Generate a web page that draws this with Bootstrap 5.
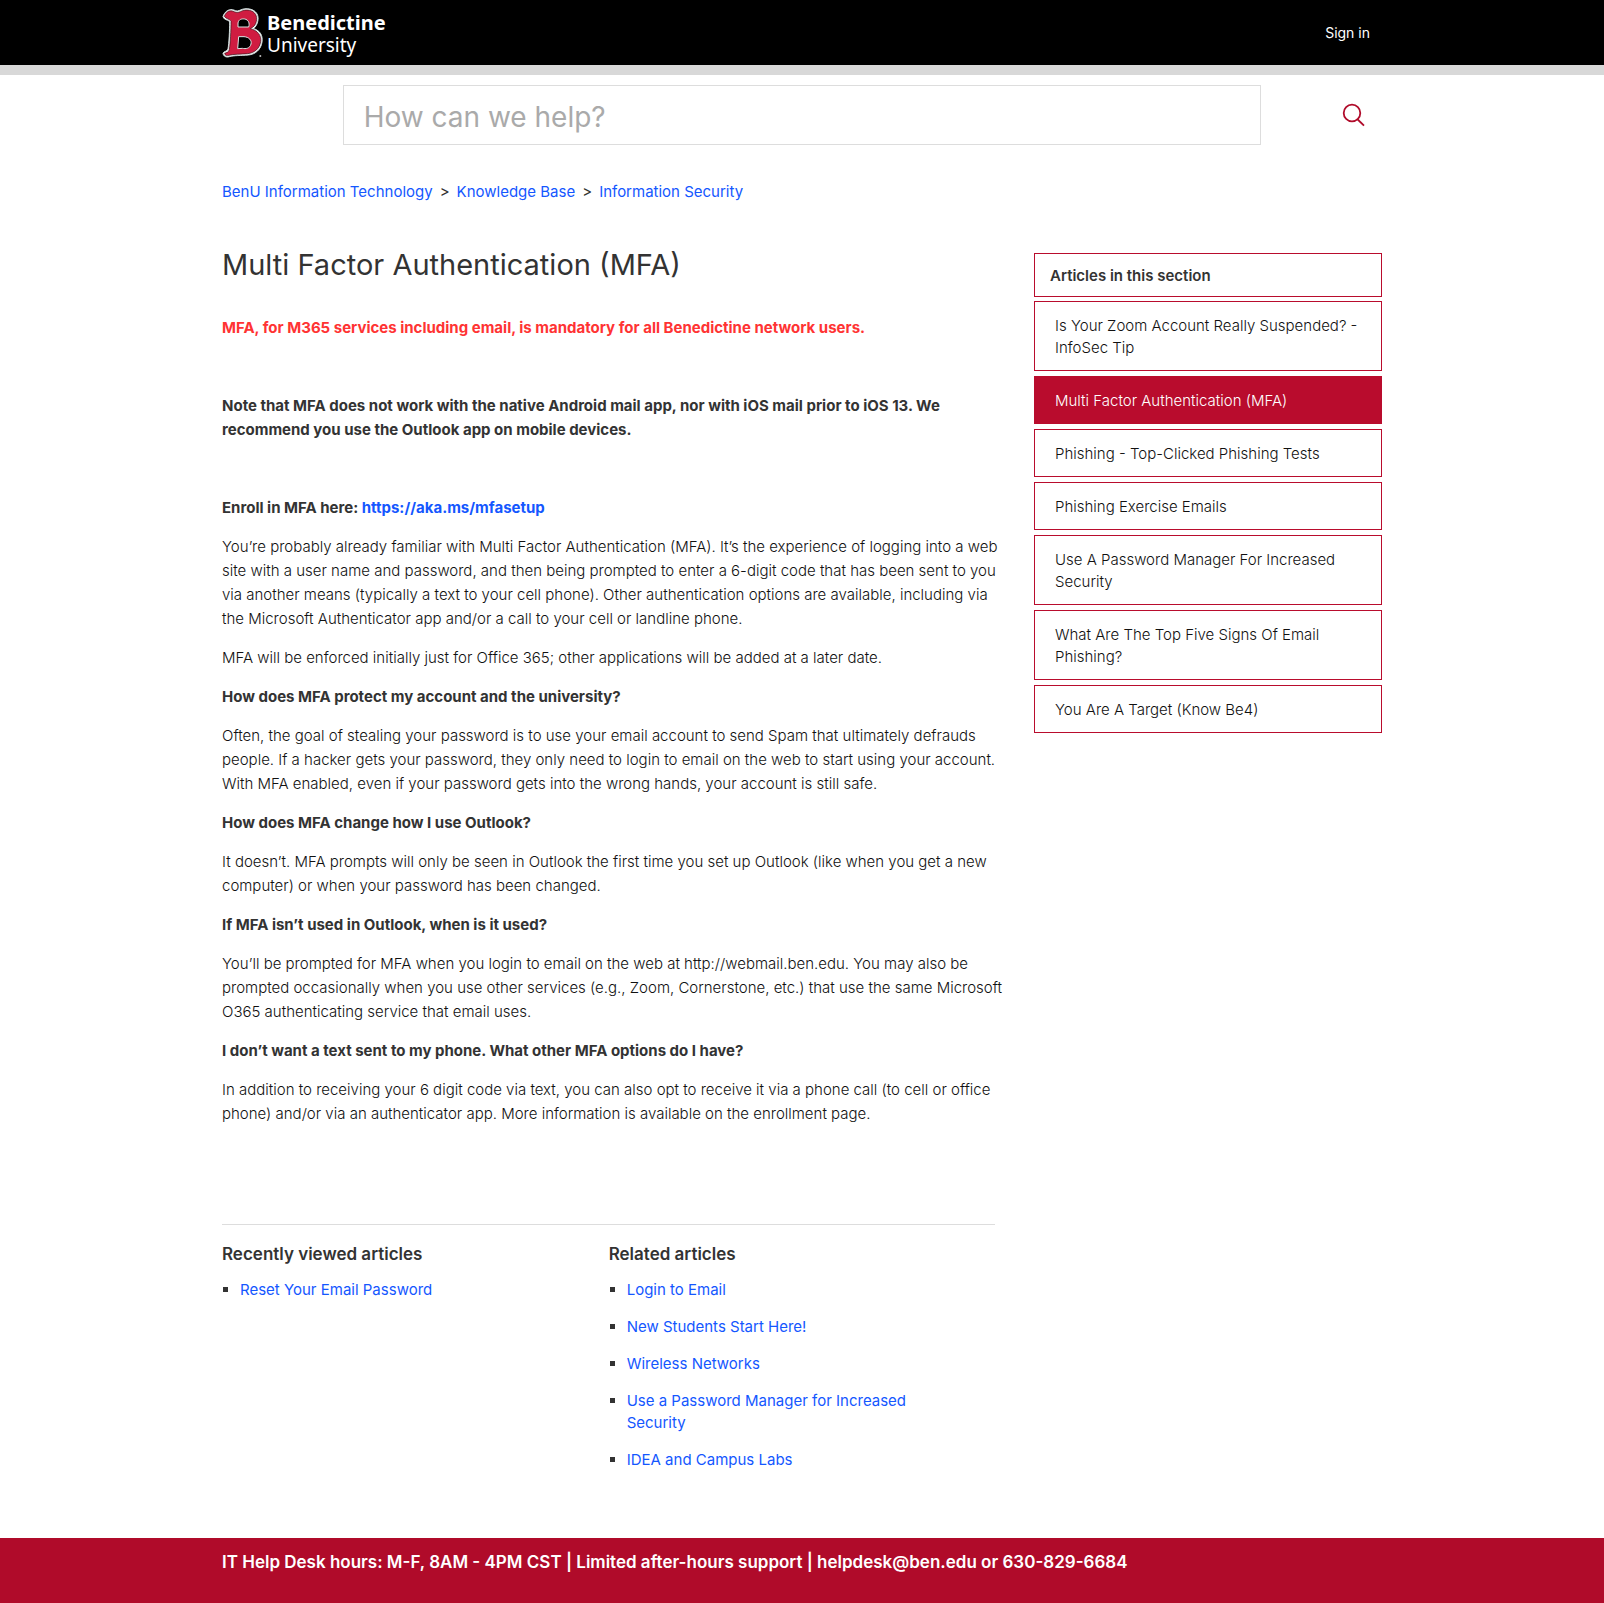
<!DOCTYPE html>
<html lang="en">
<head>
<meta charset="utf-8">
<meta name="viewport" content="width=device-width, initial-scale=1">
<title>Multi Factor Authentication (MFA) – BenU Information Technology</title>
<link href="https://cdn.jsdelivr.net/npm/bootstrap@5.3.0/dist/css/bootstrap.min.css" rel="stylesheet">
<style>
  :root { --brand: #b90c2d; --brand-dark: #b00b2a; --ink: #333; --ink-light: #111; --blue: #1457ff; }
  body { font-family: Inter, "Liberation Sans", sans-serif; font-size: 15px; line-height: 24px; color: var(--ink); }
  a { color: var(--blue); text-decoration: none; }
  a:hover { text-decoration: underline; }
  .page-width { max-width: 1160px; }
  .topbar { background: #000; border-bottom: 10px solid #d8d8d8; }
  .topbar-inner { min-height: 65px; }
  .brand-logo { font-family: "Noto Sans", sans-serif; font-size: 20px; line-height: 23px; color: #fff; gap: 3px; }
  .brand-logo:hover { text-decoration: none; }
  .brand-name { padding-top: 2px; }
  .brand-sub { font-size: 19px; }
  .signin { font-size: 14px; color: #fff; padding-right: 12px; }
  .search-row { padding-top: 10px; }
  .search-box { height: 60px; font-size: 28px; line-height: 36px; padding: 4px 20px 0; border-color: #ddd; }
  .search-box::placeholder { color: #aaa; }
  .search-btn { padding: 0 16px; margin-top: -2px; }
  .crumbs { margin-top: 35px; }
  .crumbs li + li::before { content: ">"; color: var(--ink); padding: 0 7px; }
  .main-row { margin-top: 44px; }
  .article-col { flex: 0 0 66.667%; }
  .side-col { flex: 0 0 30%; margin-top: 5px; }
  .article-col h1 { font-size: 29px; line-height: 34px; font-weight: 400; margin-bottom: 34px; }
  .article-body { font-weight: 300; color: var(--ink-light); margin-right: -10px; }
  .article-body p { margin-bottom: 15px; }
  .article-body .lede { margin-bottom: 54px; }
  .article-body h2 { font-size: 15px; line-height: 24px; font-weight: 700; color: var(--ink); margin-bottom: 15px; }
  .strong-text { font-weight: 700; color: var(--ink); }
  .strong-text.alert-red { color: #ff3333; }
  .more-articles { border-top: 1px solid #ddd; margin-top: 98px; padding: 18px 0 67px; }
  .more-articles h2 { font-size: 17px; line-height: 22px; font-weight: 600; margin-bottom: 14px; }
  .more-articles ul { list-style: none; padding: 0 60px 0 18px; margin: 0; }
  .more-articles li { line-height: 22px; margin-bottom: 15px; position: relative; }
  .more-articles li::before { content: ""; position: absolute; left: -17px; top: 8px; width: 5px; height: 5px; background: var(--ink); }
  .side-title { font-size: 15px; line-height: 22px; font-weight: 600; border: 1px solid var(--brand); padding: 11px 15px 9px; margin-bottom: 4px; }
  .side-list { gap: 5px; }
  .side-link { display: block; border: 1px solid var(--brand); color: var(--ink-light); font-weight: 300; line-height: 22px; padding: 13px 20px 11px; }
  .side-link.current { background: var(--brand); color: #fff; }
  .footer-bar { background: var(--brand-dark); color: #fff; font-size: 17px; font-weight: 600; padding: 12px 0 29px; }
</style>
<script src="https://cdn.jsdelivr.net/npm/bootstrap@5.3.0/dist/js/bootstrap.bundle.min.js"></script>
</head>
<body>
<header class="topbar">
  <div class="container-fluid page-width px-0 topbar-inner d-flex justify-content-between align-items-center">
    <a class="brand-logo d-flex align-items-center" href="#">
      <svg width="42" height="50" viewBox="35 24 126 150" aria-hidden="true">
        <g stroke-linejoin="round">
          <path d="M38 50C42 36 54 27 66 29C74 30 78 36 88 31C98 26 108 25 118 27C138 31 147 47 142 65C140 75 135 80 130 86C149 92 158 106 155 126C152 148 136 163 114 165C92 167 70 166 57 170C48 173 39 169 38 160C40 153 51 155 53 147C56 130 58 90 58 66C54 57 43 63 38 50Z" fill="#fff" stroke="#cfdcdc" stroke-width="3"/>
          <path d="M42 49C47 36 56 31 66 33C75 36 79 40 90 35C99 30 108 29 117 31C134 34 142 48 138 64C136 75 130 81 120 86C142 91 154 107 151 125C148 145 133 159 112 161C90 163 69 162 56 166C49 168 43 166 43 160C49 157 56 157 57 148C60 130 62 90 62 64C57 55 47 58 42 49Z" fill="#d01c41" stroke="#311016" stroke-width="2"/>
          <path d="M83 81V69C85 57 95 56 103 57C114 59 119 69 115 81Z" fill="#000" stroke="#dce5e5" stroke-width="3"/>
          <path d="M82 146L85 110H101C116 111 125 121 122 132C119 146 106 147 96 145Z" fill="#000" stroke="#dce5e5" stroke-width="3"/>
          <circle cx="150" cy="168" r="3" fill="#bbb"/>
        </g>
      </svg>
      <span class="brand-name"><span class="fw-bold d-block">Benedictine</span><span class="brand-sub d-block">University</span></span>
    </a>
    <a class="signin" href="#">Sign in</a>
  </div>
</header>

<div class="container-fluid page-width px-0">
  <form class="search-row d-flex align-items-center" role="search">
    <div style="width:10.4%"></div>
    <div class="flex-grow-1">
      <label class="visually-hidden" for="q">Search</label>
      <input id="q" type="search" class="form-control rounded-0 search-box" placeholder="How can we help?">
    </div>
    <div class="text-end" style="width:10.4%">
      <button class="btn border-0 search-btn" type="submit" aria-label="Search">
        <svg width="24" height="24" viewBox="0 0 24 24" fill="none" stroke="#b00b2a" stroke-width="1.8"><circle cx="10" cy="10" r="8.3"/><path d="M15.7 16.5L22 22.6"/></svg>
      </button>
    </div>
  </form>

  <nav aria-label="Breadcrumb">
    <ol class="crumbs list-unstyled d-flex flex-wrap mb-0">
      <li><a href="#">BenU Information Technology</a></li>
      <li><a href="#">Knowledge Base</a></li>
      <li><a href="#">Information Security</a></li>
    </ol>
  </nav>

  <div class="main-row d-flex justify-content-between align-items-start">
    <main class="article-col">
      <h1>Multi Factor Authentication (MFA)</h1>
      <div class="article-body">
        <p class="lede strong-text alert-red">MFA, for M365 services including email, is mandatory for all Benedictine network users.</p>
        <p class="lede strong-text">Note that MFA does not work with the native Android mail app, nor with iOS mail prior to iOS 13. We recommend you use the Outlook app on mobile devices.</p>
        <p class="strong-text">Enroll in MFA here: <a href="#">https://aka.ms/mfasetup</a></p>
        <p>You’re probably already familiar with Multi Factor Authentication (MFA). It’s the experience of logging into a web site with a user name and password, and then being prompted to enter a 6-digit code that has been sent to you via another means (typically a text to your cell phone). Other authentication options are available, including via the Microsoft Authenticator app and/or a call to your cell or landline phone.</p>
        <p>MFA will be enforced initially just for Office 365; other applications will be added at a later date.</p>
        <h2>How does MFA protect my account and the university?</h2>
        <p>Often, the goal of stealing your password is to use your email account to send Spam that ultimately defrauds people. If a hacker gets your password, they only need to login to email on the web to start using your account. With MFA enabled, even if your password gets into the wrong hands, your account is still safe.</p>
        <h2>How does MFA change how I use Outlook?</h2>
        <p>It doesn’t. MFA prompts will only be seen in Outlook the first time you set up Outlook (like when you get a new computer) or when your password has been changed.</p>
        <h2>If MFA isn’t used in Outlook, when is it used?</h2>
        <p>You’ll be prompted for MFA when you login to email on the web at http://webmail.ben.edu. You may also be prompted occasionally when you use other services (e.g., Zoom, Cornerstone, etc.) that use the same Microsoft O365 authenticating service that email uses.</p>
        <h2>I don’t want a text sent to my phone. What other MFA options do I have?</h2>
        <p>In addition to receiving your 6 digit code via text, you can also opt to receive it via a phone call (to cell or office phone) and/or via an authenticator app. More information is available on the enrollment page.</p>
      </div>
      <div class="more-articles row g-0">
        <section class="col-6">
          <h2>Recently viewed articles</h2>
          <ul><li><a href="#">Reset Your Email Password</a></li></ul>
        </section>
        <section class="col-6">
          <h2>Related articles</h2>
          <ul>
            <li><a href="#">Login to Email</a></li>
            <li><a href="#">New Students Start Here!</a></li>
            <li><a href="#">Wireless Networks</a></li>
            <li><a href="#">Use a Password Manager for Increased Security</a></li>
            <li class="mb-0"><a href="#">IDEA and Campus Labs</a></li>
          </ul>
        </section>
      </div>
    </main>
    <aside class="side-col">
      <h2 class="side-title">Articles in this section</h2>
      <nav class="side-list d-flex flex-column" aria-label="Articles in this section">
        <a class="side-link" href="#">Is Your Zoom Account Really Suspended? - InfoSec Tip</a>
        <a class="side-link current" href="#" aria-current="page">Multi Factor Authentication (MFA)</a>
        <a class="side-link" href="#">Phishing - Top-Clicked Phishing Tests</a>
        <a class="side-link" href="#">Phishing Exercise Emails</a>
        <a class="side-link" href="#">Use A Password Manager For Increased Security</a>
        <a class="side-link" href="#">What Are The Top Five Signs Of Email Phishing?</a>
        <a class="side-link" href="#">You Are A Target (Know Be4)</a>
      </nav>
    </aside>
  </div>
</div>

<footer class="footer-bar">
  <div class="container-fluid page-width px-0">IT Help Desk hours: M-F, 8AM - 4PM CST | Limited after-hours support | helpdesk@ben.edu or 630-829-6684</div>
</footer>
</body>
</html>
